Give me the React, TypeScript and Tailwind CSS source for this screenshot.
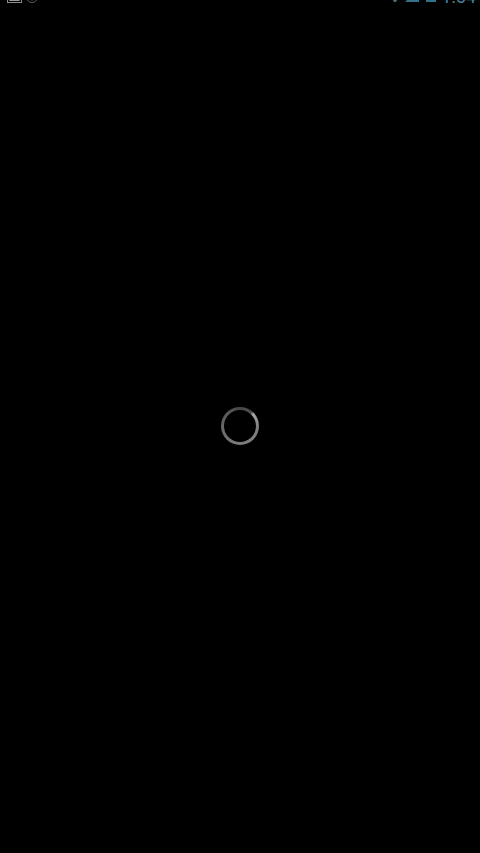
import React from 'react';

const StatusBar: React.FC = () => {
  return (
    <header className="flex h-1 shrink-0 items-end justify-between pl-1.5 pr-1">
      <div className="flex items-end gap-1">
        {/* Screenshot notification */}
        <svg className="h-4 w-4" viewBox="0 0 16 16" fill="none" aria-hidden="true">
          <rect x="1.5" y="1.5" width="14" height="13" stroke="#8c8c8c" />
          <path d="M3 13 6.500 7l3 3.500L11 9l3 4z" fill="#9a9a9a" />
        </svg>
        <svg className="h-4 w-3" viewBox="0 0 12 16" fill="none" aria-hidden="true">
          <circle cx="6" cy="9" r="5.500" stroke="#5c5c5c" />
          <path d="M6 8v5" stroke="#484848" />
        </svg>
      </div>
      <div className="flex items-end gap-1">
        <svg className="h-4 w-3" viewBox="0 0 12 16" aria-hidden="true">
          <path d="M0 5q6-5 12 0L7 14H5z" fill="#4f6c76" />
        </svg>
        <svg className="h-4 w-4" viewBox="0 0 16 16" aria-hidden="true">
          <path d="M14 1v13H0z" fill="#34728a" />
        </svg>
        <svg className="h-4 w-3" viewBox="0 0 12 16" aria-hidden="true">
          <path d="M4 0h4v2h3v12H1V2h3z" fill="#34728a" />
        </svg>
        <span className="text-lg leading-3.5 text-[#4a7f94]">1:54</span>
      </div>
    </header>
  );
};

const Spinner: React.FC = () => {
  return (
    <div
      role="status"
      aria-label="Loading"
      className="flex size-[38px] items-center justify-center rounded-full bg-[conic-gradient(#484848_0deg,#505050_40deg,#a8a8a8_48deg,#808080_90deg,#7c7c7c_180deg,#686868_270deg,#484848_360deg)]"
    >
      <div className="size-8 rounded-full bg-black" />
    </div>
  );
};

const App: React.FC = () => {
  return (
    <div className="flex min-h-screen flex-col overflow-hidden bg-black font-['Roboto',sans-serif]">
      <StatusBar />
      <main className="flex flex-1 items-center justify-center pb-1.5">
        <Spinner />
      </main>
    </div>
  );
};

export default App;
